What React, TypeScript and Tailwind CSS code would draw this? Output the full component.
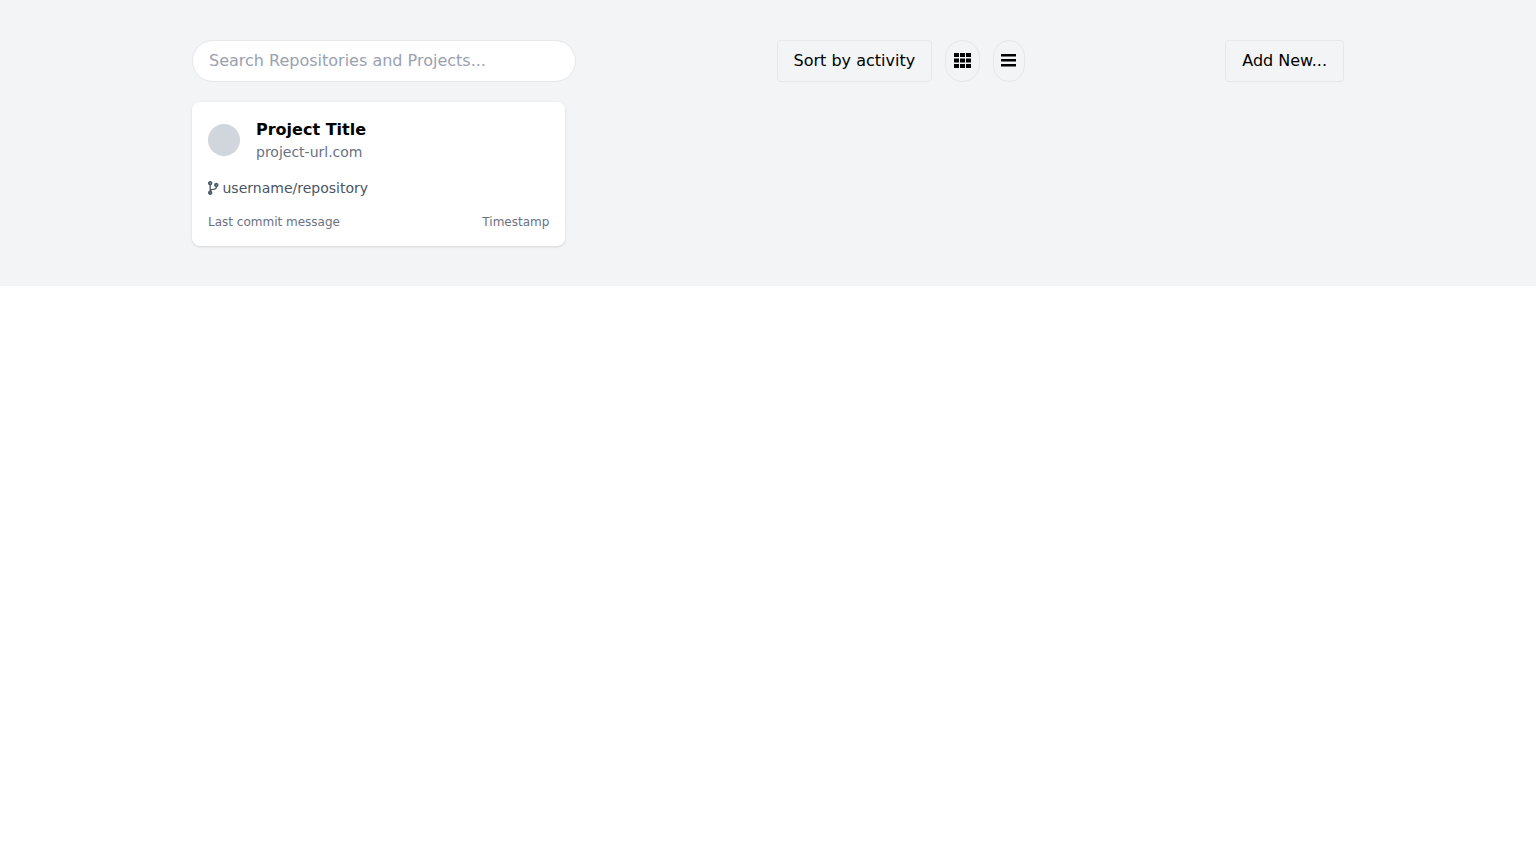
import { FaCodeBranch } from "react-icons/fa";

function GridIcon() {
  return (
    <svg width="17" height="15" viewBox="0 0 17 15" fill="currentColor">
      <path d="M0 0h5v4H0zM6 0h5v4H6zM12 0h5v4h-5zM0 5.500h5v4H0zM6 5.500h5v4H6zM12 5.500h5v4h-5zM0 11h5v4H0zM6 11h5v4H6zM12 11h5v4h-5z" />
    </svg>
  );
}

function ListIcon() {
  return (
    <svg width="15" height="13" viewBox="0 0 15 13" fill="currentColor">
      <path d="M0 0h15v2.500H0zM0 5h15v2.500H0zM0 10h15v2.500H0z" />
    </svg>
  );
}

export default function App() {
  return (
    <div className="font-['DejaVu_Sans',sans-serif] antialiased">
      <div className="bg-gray-100 py-10">
        <div className="w-[1152px] mx-auto">
          {/* Toolbar */}
          <div className="flex items-center justify-between mb-5">
            <input
              type="text"
              placeholder="Search Repositories and Projects..."
              className="w-96 px-4 py-2 bg-white border border-gray-200 rounded-full text-base leading-6 placeholder:text-gray-400 focus:outline-none"
            />
            <div className="flex items-center">
              <button className="px-4 py-2 border border-gray-200 rounded text-base leading-6 text-black">
                Sort by activity
              </button>
              <button className="flex items-center justify-center ml-[13px] w-[34.500px] h-[42px] pb-px border border-gray-200 rounded-full text-black">
                <GridIcon />
              </button>
              <button className="flex items-center justify-center ml-[13px] w-8 h-[42px] pb-px border border-gray-200 rounded-full text-black">
                <ListIcon />
              </button>
            </div>
            <button className="px-4 py-2 border border-gray-200 rounded text-base leading-6 text-black">
              Add New...
            </button>
          </div>

          {/* Projects */}
          <div className="grid grid-cols-3 gap-4">
            <div className="bg-white rounded-lg shadow p-4">
              <div className="flex items-center">
                <div className="w-8 h-8 rounded-full bg-gray-300 mr-4" />
                <div>
                  <div className="text-base font-bold text-black">Project Title</div>
                  <div className="text-sm text-gray-500">project-url.com</div>
                </div>
              </div>
              <div className="flex items-center mt-4 text-sm text-gray-600">
                <FaCodeBranch className="w-[10.500px] h-3.5 mr-1" />
                username/repository
              </div>
              <div className="flex justify-between mt-4 text-xs text-gray-500">
                <span>Last commit message</span>
                <span>Timestamp</span>
              </div>
            </div>
          </div>
        </div>
      </div>
    </div>
  );
}
